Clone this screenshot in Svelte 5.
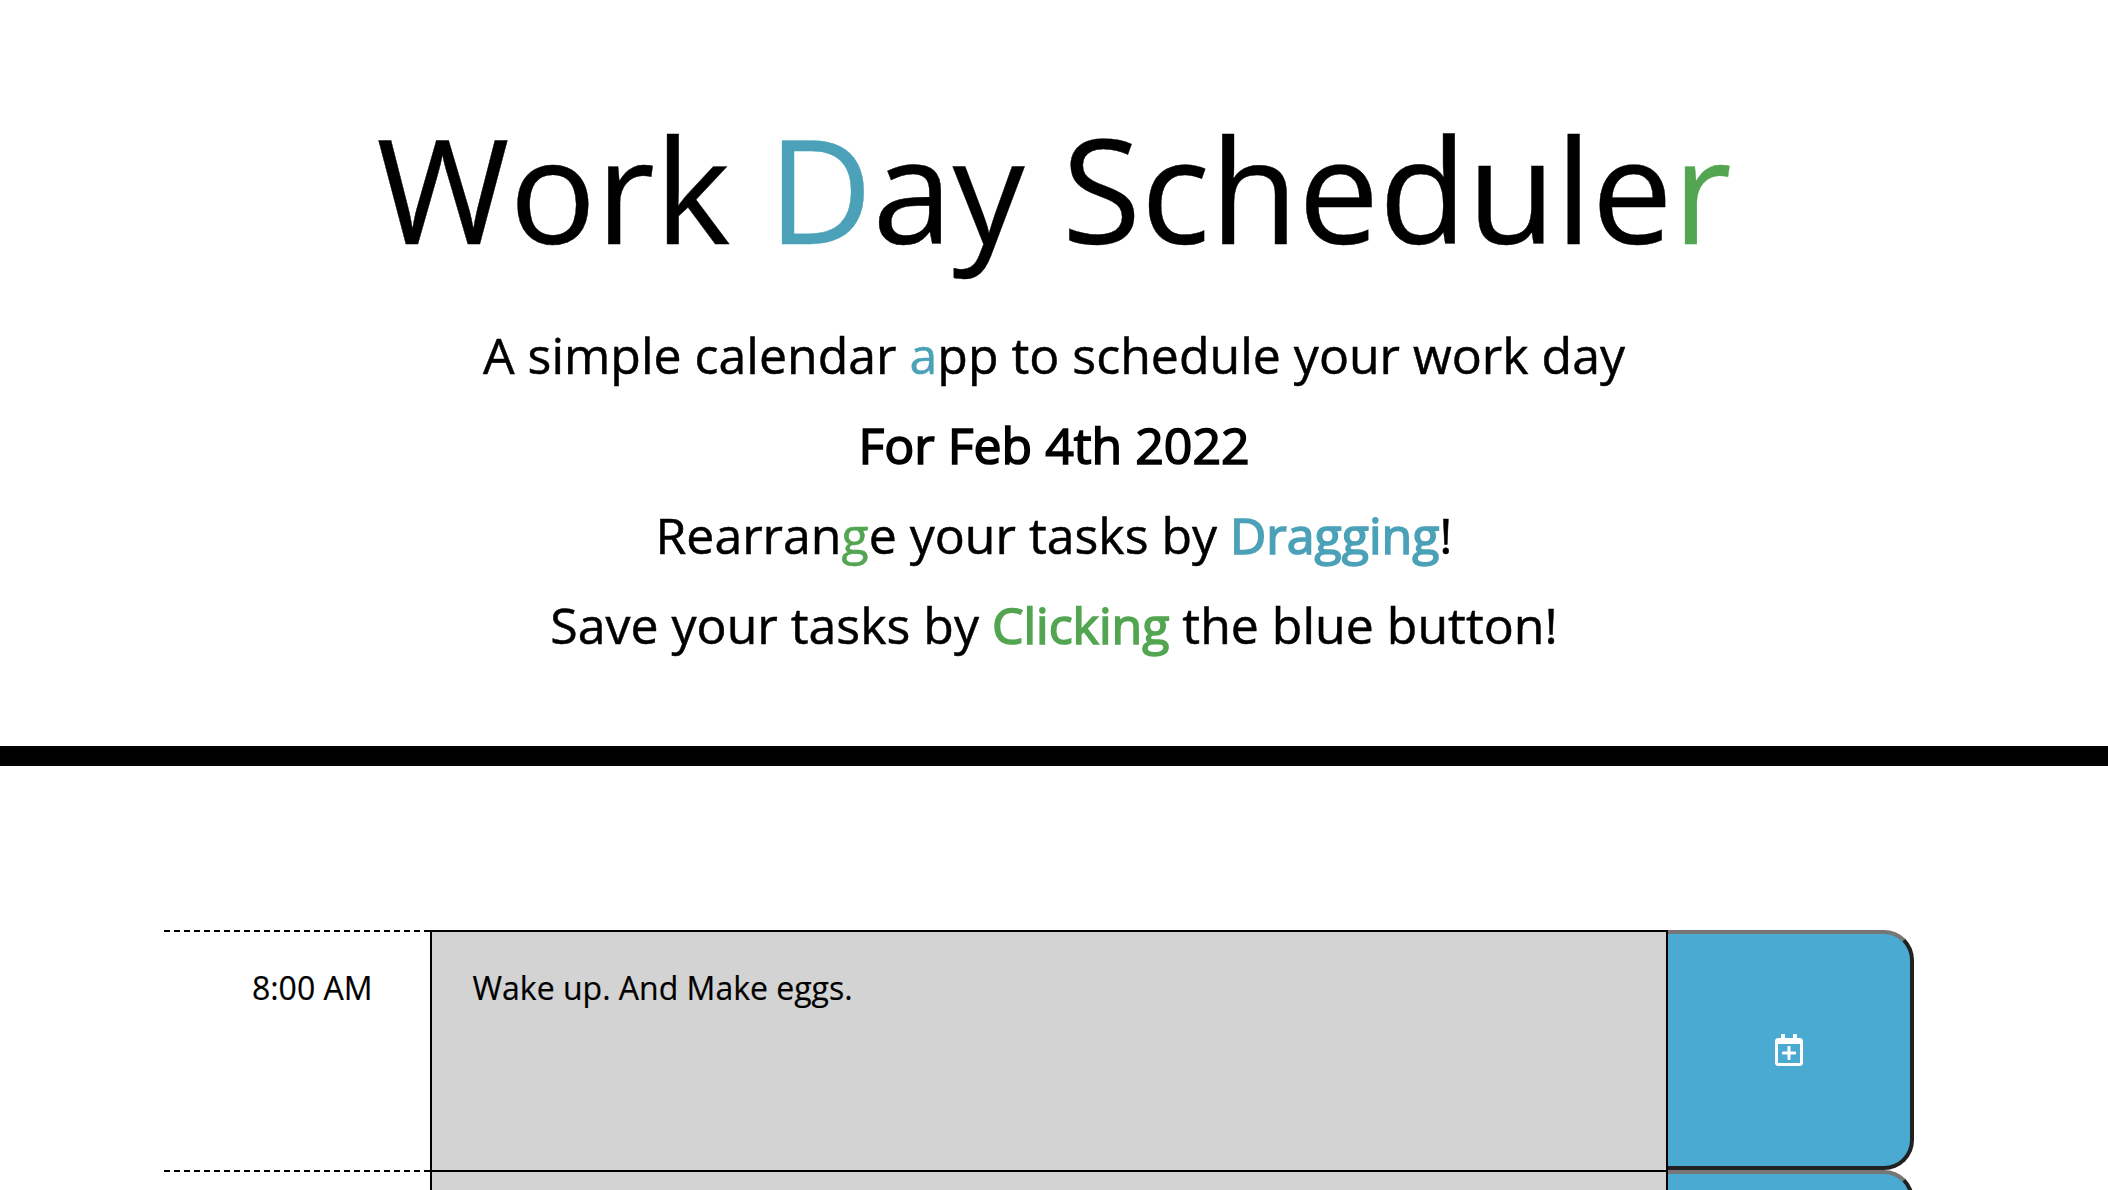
<script>
  const slots = [
    { time: '8:00 AM', task: 'Wake up. And Make eggs.' },
    { time: '', task: '' },
  ];
</script>

<div class="page">
  <header>
    <h1>Work <span class="blue">D</span>ay Schedule<span class="green">r</span></h1>
    <p>A simple calendar <span class="blue">a</span>pp to schedule your work day</p>
    <p class="bold">For Feb 4th 2022</p>
    <p>Rearran<span class="green">g</span>e your tasks by <span class="blue bold">Dragging</span>!</p>
    <p>Save your tasks by <span class="green bold">Clicking</span> the blue button!</p>
  </header>
  <main>
    {#each slots as slot}
      <div class="row">
        <div class="hour">{slot.time}</div>
        <div class="task">{slot.task}</div>
        <button class="save" aria-label="Save">
          <svg viewBox="0 0 448 512"><path fill="#fff" d="M336 292v24c0 6.600-5.400 12-12 12h-76v76c0 6.600-5.400 12-12 12h-24c-6.600 0-12-5.400-12-12v-76h-76c-6.600 0-12-5.400-12-12v-24c0-6.600 5.400-12 12-12h76v-76c0-6.600 5.400-12 12-12h24c6.600 0 12 5.400 12 12v76h76c6.600 0 12 5.400 12 12zm112-180v352c0 26.500-21.500 48-48 48H48c-26.500 0-48-21.500-48-48V112c0-26.500 21.500-48 48-48h48V12c0-6.600 5.400-12 12-12h40c6.600 0 12 5.400 12 12v52h128V12c0-6.600 5.400-12 12-12h40c6.600 0 12 5.400 12 12v52h48c26.500 0 48 21.500 48 48zm-48 346V160H48v298c0 3.300 2.700 6 6 6h340c3.300 0 6-2.700 6-6z"/></svg>
        </button>
      </div>
    {/each}
  </main>
</div>

<style>
  :global(body) { overflow: hidden; background: #fff; }
  .page { height: 1190px; overflow: hidden; font-family: 'Open Sans', sans-serif; color: #000; }
  header { box-sizing: border-box; height: 766px; border-bottom: 20px solid #000; padding-top: 92px; text-align: center; }
  h1 { margin: 0; font-size: 144px; font-weight: 400; line-height: 192px; height: 218px; -webkit-text-stroke: 0.4px; }
  p { margin: 0; font-size: 50px; line-height: 90px; -webkit-text-stroke: 0.5px; }
  .bold { -webkit-text-stroke: 1.6px; }
  .blue { color: #4ba1b7; }
  .green { color: #53a551; }
  main { padding: 164px 194px 0 164px; }
  .row { display: flex; height: 240px; }
  .hour { box-sizing: border-box; width: 266px; border-top: 2px dashed #000; padding: 32px 57.500px 0 0; text-align: right; font-size: 32px; line-height: 48px; -webkit-text-stroke: 0.2px; }
  .task { box-sizing: border-box; width: 1238px; border: 2px solid #000; border-bottom: 0; background: #d3d3d3; padding: 32px 40.500px; font-size: 32px; line-height: 48px; -webkit-text-stroke: 0.2px; }
  .save { box-sizing: border-box; width: 246px; padding: 0; background: #4baad1; border: 4px solid #212121; border-top-color: #767676; border-left: 0; border-radius: 0 30px 30px 0; display: flex; align-items: center; justify-content: center; }
  svg { width: 28px; height: 32px; }
</style>
